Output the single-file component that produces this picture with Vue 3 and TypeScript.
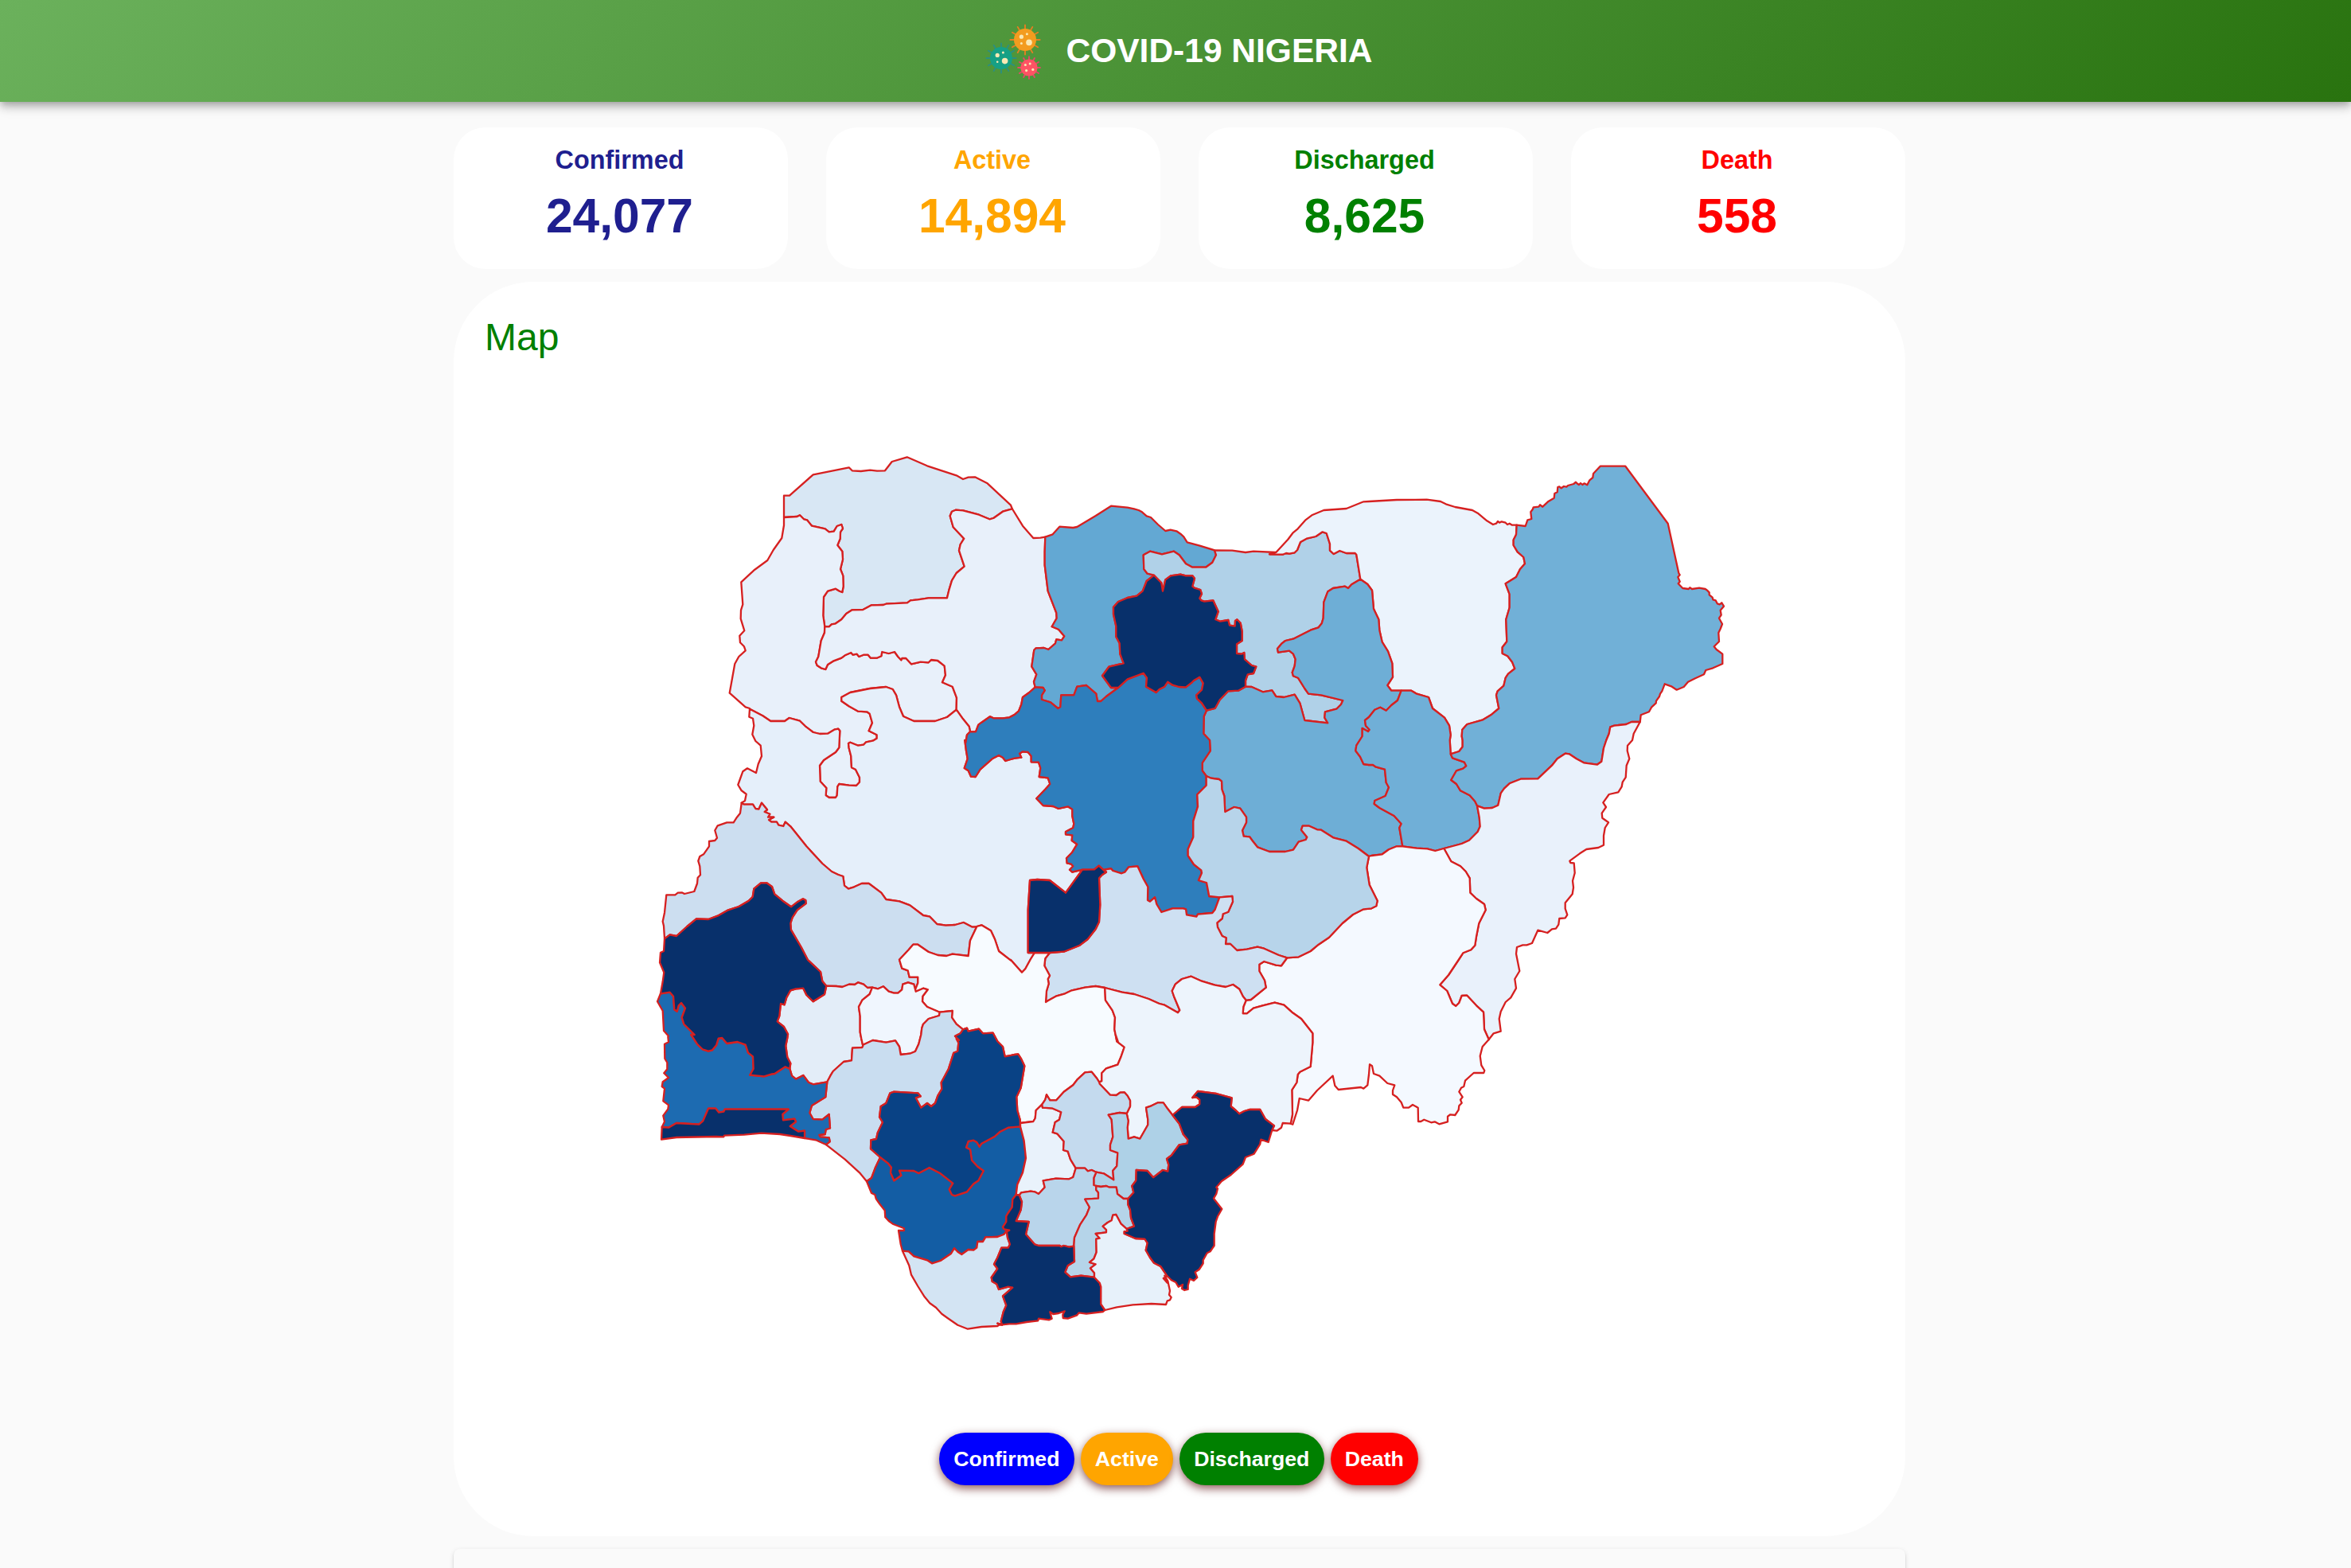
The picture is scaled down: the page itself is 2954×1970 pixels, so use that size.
<script setup lang="ts">
interface Stat {
  label: string
  value: string
  color: string
}

interface Virus {
  x: number
  y: number
  r: number
  reach: number
  body: string
  spike: string
  dots: [number, number, number][]
}

const stats: Stat[] = [
  { label: 'Confirmed', value: '24,077', color: '#1f1f8f' },
  { label: 'Active', value: '14,894', color: '#ffa500' },
  { label: 'Discharged', value: '8,625', color: '#008000' },
  { label: 'Death', value: '558', color: '#ff0000' },
]

const filters = [
  { label: 'Confirmed', color: '#0000ff' },
  { label: 'Active', color: '#ffa500' },
  { label: 'Discharged', color: '#008000' },
  { label: 'Death', color: '#ff0000' },
]

const viruses: Virus[] = [
  { x: 50, y: 20, r: 14, reach: 19.5, body: '#f39c1f', spike: '#e67e22', dots: [[-4.6, -3.8, 2.6], [2.4, -7.3, 1.5], [-4.6, 4.6, 1.5], [5, 3.4, 3.8]] },
  { x: 20, y: 43, r: 14, reach: 19.5, body: '#16a085', spike: '#2c8f80', dots: [[-4.8, -3.6, 2.6], [2.4, -7, 1.5], [-4.8, 4.8, 1.3], [4.6, 3.6, 3.8]] },
  { x: 55, y: 55, r: 10.6, reach: 14.8, body: '#ff5364', spike: '#e2486a', dots: [[-4.6, -3.6, 1.5], [1.2, -5, 1.5], [-3.4, 3.6, 1.6], [4.8, 2.4, 1.6]] },
]
const angles = Array.from({ length: 12 }, (_, i) => i * 30)

// Origin of each map sheet. Border points are stored per sheet in thirds of a unit.
const sheets: Record<string, [number, number]> = {
  A: [820, 560], B: [1270, 560], C: [1720, 560],
  D: [820, 930], E: [1270, 930], F: [1720, 930],
  G: [820, 1300], H: [1270, 1300],
}

// Borders are shared between neighbours: "o" arcs are the national outline, "i" arcs are internal.
const arcs: Record<string, string> = {
  o1: 'A 495,270 495,188 516,188 605,109 740,82 752,94 785,96 820,92 846,95 876,94 902,60 959,43 1035,76 1145,112 1170,126 1190,119 1215,118 1262,142 1350,224 1355,237',
  o2: 'A 1355,237 B 45,302 85,348 112,347 130,344',
  o3: 'B 130,344 158,334 184,305 235,309 250,306 320,264 378,227 440,233 465,238 482,243 495,250 512,265 528,270 555,297 583,321 602,317 625,322 640,332 652,343 665,364 710,376 768,394',
  o4: 'B 768,394 835,395 885,402 915,398 1000,402',
  o5: 'B 1000,402 1045,353 1063,329 1082,313 1110,281 1135,262 1180,243 1265,237 1330,211 C 0,210 105,204 218,203 270,210 290,220 325,231 390,243 410,254 445,283 468,297 480,293 486,285 492,290 500,286 515,290 522,297 530,293 540,299 557,299',
  o6: 'C 557,299 590,303 598,280 613,276 610,250 617,240 620,232 640,230 645,223 655,230 675,211 698,197 700,180 710,175 712,156 718,154 725,160 735,153 745,155 750,150 772,144 780,137 786,143 792,147 798,141 805,147 812,142 823,148 832,130 844,120 846,105 872,77 967,77 1127,293 1168,480 1172,487 1165,495 1172,512 1166,520 1183,537 1205,540 1210,535 1218,540 1245,536 1268,540 1275,545 1283,553 1283,562 1295,572 1297,580 1307,583 1313,595 1322,598 1330,592 1338,605 1325,620 1328,638 1320,650 1332,672 1325,690 1318,705 1320,738 1301,757 1310,768 1333,785 1333,822 1297,838 1270,846 1263,862 1230,877 1203,890 1187,909 1160,920 1140,907 1115,898 1105,925 1098,935 1095,945 1083,962 1082,970 1066,985 1056,1003 1025,1015 1022,1041',
  o7: 'C 1022,1041 998,1085 993,1110 975,1130 F 975,20 974,40 982,70 971,95 968,140 956,158 953,175 940,196 905,204 883,235 894,252 878,275 880,293 903,310 890,330 885,360 885,395 865,405 820,411 795,427 757,455 760,462 773,463 776,500 768,530 771,555 767,580 740,613 740,635 748,658 740,670 718,672 715,695 705,710 690,712 673,726 637,716 626,740 615,765 595,772 580,772 558,780 555,805 568,870 550,900 555,935 535,970 515,987 497,1023 491,1050 497,1097 470,1105 452,1128',
  o8: 'F 452,1128 428,1155 419,1190 424,1225 436,1245 433,1254 395,1254 363,1283 358,1305 348,1310 340,1325 353,1345 345,1355 350,1367 340,1378 338,1393 325,1413 307,1411 297,1418 297,1438 265,1447 248,1438 235,1441 208,1430 196,1437 186,1437 185,1385 165,1374 150,1385 130,1385 122,1365 105,1345 90,1335 90,1320 97,1300 70,1293 40,1265 18,1257 12,1228 3,1222 H 1350,150 1345,190 1330,203 1320,198 1235,207 1222,192 1214,155 1155,210 1122,248 1088,240 1080,285 1063,338',
  o9: 'H 1055,335 1025,333 1020,350 1003,362 985,360',
  o10: 'H 985,360 971,405 943,395 940,412 917,449 885,462 875,488 830,528 795,552 775,575 780,580 775,600 765,617 796,657 780,685 773,705 767,750 767,795 752,817 740,823 725,850 725,862 710,885 695,895 703,915 690,927 675,920 668,945 668,960 655,963 645,957 648,942 632,950 622,933 605,925 590,910',
  o11: 'H 590,910 575,918 590,935 580,908 592,928 600,965 597,980 605,990 600,1000 590,1003 585,1017 530,1014 460,1018 400,1027 355,1038',
  o12: 'H 355,1038 348,1044 285,1052 257,1048 250,1057 215,1070 197,1068 196,1055 203,1042 180,1050 160,1053 148,1045 155,1070 145,1075 105,1070 103,1078 60,1083 20,1090 G 1345,1090 1310,1094',
  o13: 'G 1310,1090 1300,1098 1240,1101 1188,1109 1150,1094 1115,1070 1090,1052 1068,1028 1045,1012 1025,988 1000,948 975,905 967,870 942,815',
  o14: 'G 942,815 935,790 927,738 948,738 948,730 905,713 890,702 877,688 875,662 855,637 842,618 838,603 825,597 807,553',
  o15: 'G 807,553 780,520 725,470 655,415',
  o16: 'G 655,415 615,397 573,390',
  o17: 'G 573,390 520,381 480,375 410,371 345,377 270,380 268,385 240,384 90,387 33,395 35,348',
  o18: 'G 35,348 45,328 40,305 58,280 60,265 40,250 45,203 35,195 38,178 60,162 43,145 55,130 55,105 46,90 45,35 60,28 58,8 D 60,1115 42,1095 38,1020 18,985 30,955',
  o19: 'D 30,955 38,910 43,875 27,838 30,800 42,795 45,748',
  o20: 'D 45,748 42,700 38,683 45,650 52,583 85,583 95,575 110,574 120,579 157,570 168,540 170,518 180,508 178,475 172,455 178,438 192,430 213,400 213,381 235,378 243,368 235,340 245,322 280,310 305,310 318,290 330,275 335,238',
  o21: 'D 335,236 348,228 353,203 335,190 322,168 340,118 357,106 390,123 398,90 411,60 407,20 388,3 A 376,1088 382,1055 378,1028 364,1022 366,992',
  o22: 'A 366,990 350,985 290,932 310,822 325,795 350,772 345,757 330,742 328,716 346,697 332,652 333,620 340,598 334,514 385,467 433,432 455,393 487,348 495,300 495,270',
  i1: 'A 495,270 545,267 555,262 570,277 582,280 600,302 650,313 665,325 683,323 695,303 712,297 717,312 708,325 707,350 697,375 715,398 717,428 708,465 718,490 719,530 715,552 705,548 690,539 660,548 645,570 643,640 649,682',
  i2: 'A 649,682 665,682 675,673 688,671 712,655 730,633 752,619 793,618 825,601 870,600 880,596 960,592 972,583 1000,580 1040,574 1110,574 1117,545 1128,508 1145,480 1175,455 1155,395 1160,372 1174,350 1133,307 1121,265 1128,248 1142,242 1170,244 1230,260 1270,277 1285,273 1320,248 1355,238',
  i3: 'A 649,682 648,705 635,735 625,795 615,815 620,828 635,838 652,843 660,825 680,812 712,800 725,790 748,780 755,788 770,785 778,795 795,788 812,788 822,800 845,800 862,793 865,777 890,783 912,777 925,795 937,808 940,801 955,801 975,823 1010,815 1040,817 1050,807 1075,810 1100,830 1104,865 1092,892 1130,908 1146,950 1145,995',
  i4: 'A 1145,995 1110,1023 1065,1038 985,1038 945,1020 930,985 918,940 905,918 880,909 820,915 745,930 712,948 712,962 740,982 775,1001 808,1003 818,1010 828,1045 815,1075 845,1090 845,1103 830,1112 805,1117 795,1127 775,1130 745,1118 738,1122 740,1140 D 748,60 750,103 765,110 780,140 780,158 768,171 740,170 703,165 697,175 695,208 690,216 665,216 653,208 655,180 632,155 630,95 645,75 690,45 703,28 A 706,1075 700,1067 685,1070 660,1085 630,1086 605,1080 575,1057 555,1037 515,1026 498,1038 445,1038 415,1018 366,992',
  i5: 'A 1145,995 1170,1030 1193,1058 1197,1078',
  i6: 'A 1197,1078 1218,1078 1228,1052 1240,1043 1272,1021 1285,1027 1320,1027 1345,1024 1365,1013 B 30,1000 40,975 45,948 70,930 92,910',
  i7: 'B 92,910 87,890 97,862 79,832 88,770 95,763 125,762 142,768 168,745 172,730 192,733 202,718 180,692 155,682 173,650 172,630 140,548 128,450 128,400 130,344',
  i8: 'B 92,910 122,912 128,922 117,940 117,957 150,967 178,990 187,985 190,940 238,940 250,908 285,903 322,935 327,963 340,963 360,945 405,912',
  i9: 'B 405,912 378,912 345,867 370,833 425,820 412,785 410,745 397,720 397,680 387,635 387,608 405,588 440,573 475,566 497,548 512,510 540,488',
  i10: 'B 540,488 515,482 502,465 500,412 525,398 570,409 615,398 635,412 660,445 685,458 735,458 760,440 774,412 768,394',
  i11: 'B 540,488 568,517 573,548 583,505 603,490 640,485 660,490 685,490 693,500 685,530 692,536 715,543 720,558 712,575 718,583 730,587 763,583 782,625 772,655 790,662 820,657 825,677 845,680 846,660 853,655 866,668 872,700 872,735 852,748 852,783 870,785 880,780 882,805 908,828 925,833 915,858 893,862 885,885 885,908',
  i12: 'B 405,912 440,880 500,857 513,875 510,908 548,930 560,918 580,908 592,890 610,902 635,909 660,910 683,892 690,885 712,872 725,895 720,920 700,940 702,953 720,970 738,998',
  i13: 'B 738,998 770,990 788,958 820,925 858,923 885,908',
  i14: 'B 885,908 908,909 950,928 985,922 1000,945 1030,948 1070,938 1090,970 1108,1035 1195,1045 1183,1025 1185,1003 1228,992 1245,975 1252,960 1170,940 1122,935 1108,915 1083,875 1065,868 1061,855 1070,830 1073,805 1065,785 1050,773 1008,779 1005,765 1022,745 1035,735 1065,728 1130,695 1160,685 1172,670 1178,650 1180,590 1195,550 1215,537 1260,530 1272,537 1285,523 1318,503',
  i15: 'B 1318,503 1303,410 1298,405 1265,405 1240,396 1217,408 1203,395 1203,370 1190,330 1175,325 1150,342 1115,350 1092,363 1080,393 1070,403 1050,407 1038,405 1025,410 975,409 1000,402',
  i16: 'B 1318,503 1345,522 1362,545 1365,580 1368,615 C 37,655 40,695 50,740 72,775 88,820 90,872 70,903 85,923 122,923',
  i17: 'C 122,923 160,923 180,935 225,948 240,990 285,1025 303,1055 308,1090 F 305,0 308,52',
  i18: 'F 308,52 340,42 353,25 353,0 C 350,1095 352,1070 370,1050 430,1033 460,1015 490,990 480,940 485,925 508,905 515,875 525,860 550,840 540,815 523,793 503,783 503,760 520,738 517,655 530,610 530,560 515,520 555,495 570,465 588,445 583,420 560,400 545,375 545,355 555,335 557,299',
  i19: 'F 308,52 315,67 360,83 367,97 355,107 330,115 310,150 330,165 345,190 380,208 400,230 408,247',
  i20: 'F 408,247 435,257 465,255 487,245 497,200 510,182 530,163 572,146 637,145 690,95 710,70 740,50 755,52 782,70 810,85 860,92 877,80 885,30 895,0 C 905,1085 910,1060 925,1055 970,1050 990,1041 1022,1041',
  i21: 'F 408,247 416,290 419,325 410,345 378,377 350,390 283,408',
  i22: 'C 122,923 108,960 85,978 65,998 43,986 22,995 0,1023 B 1335,1035 1338,1055 1352,1070 1347,1077 1325,1065 1325,1095 1303,1130 E 1300,40 1317,62 1330,90 1350,93 F 15,93 25,100 60,110 65,160 75,178 62,210 22,228 20,240 40,255 95,285 122,315 115,330 127,400',
  i23: 'F 127,400 180,407 220,409 250,417 283,408',
  i24: 'F 127,400 105,400 75,412 50,430 10,435 E 1350,438',
  i25: 'F 283,408 310,457 345,475 365,495 380,520 382,575 405,597 435,618 440,640 415,690 405,740 400,773 385,790 355,802 340,825 300,885 268,922 295,945 315,993 328,1002 340,990 350,963 370,962 405,1000 432,1025 435,1090 452,1128',
  i26: 'B 738,998 728,1020 727,1085 750,1110 E 752,40 722,85 722,115 737,135',
  i27: 'E 737,135 755,143 785,147 795,155 796,185 805,210 808,270 842,252 865,257 888,290 888,310 873,340 878,362 900,364 912,380 930,403 975,420 1035,420 1065,413 1085,383 1112,375 1117,365 1095,338 1100,323 1125,323 1155,337 1170,338 1215,367 1265,380 1310,408 1350,438',
  i28: 'E 737,135 737,170 703,205 705,250 688,305 688,365 668,410 668,435 690,468 718,490 720,500 708,528 738,537 748,588 787,592',
  i29: 'E 787,592 770,638 760,651 705,656 700,665 663,658 660,637 650,634 610,634 568,648 550,618 543,592 525,608 516,603 517,553 500,523 478,475 445,478 430,497 418,502 385,492 378,484 355,487',
  i30: 'E 358,497 332,473 315,487 270,488',
  i31: 'E 270,488 232,497 222,488 235,475 228,467 212,463 210,445 232,422 250,392 230,378 232,358 207,355 207,345 235,330 238,315 232,285 232,260 215,250 180,258 160,249 122,246 97,220 130,185 148,165 140,142 107,138 112,105 105,83 77,82 77,60 65,45 45,43 33,50 40,65 15,68 0,72 D 1330,78 1320,65 1305,57 1280,70 1235,110 1217,138 1200,137 1190,115 1175,105 1187,70 1182,40 1177,0 A 1180,1120 1185,1090 1197,1078',
  i32: 'E 270,488 207,575 147,528 100,525 72,528 65,640 65,801 90,801',
  i33: 'E 90,801 147,801',
  i34: 'E 147,801 200,797 260,773 290,750 320,712 333,685 337,620 333,520 345,507 360,497',
  i35: 'E 90,801 75,825 55,862 42,875 0,828 D 1350,830 1305,795 1290,750 1275,718 1240,697 1222,702',
  i36: 'D 335,236 345,242 378,242 388,258 400,260 411,236 432,262 422,270 442,278 435,290 457,290 438,300 448,308 468,308 475,320 493,324 500,308 520,325 580,400 640,465 675,495 700,507 718,513 723,548 738,560 760,553 788,540 815,540 862,575 880,600 930,607 970,622 1020,660 1045,665 1072,693 1105,698 1140,696 1172,687 1205,704 1222,703',
  i37: 'D 1222,703 1197,755 1190,813 1150,808 1130,806 1108,813 1075,810 1040,798 1000,770 982,770 965,790 930,827 940,860 962,868 968,893 1000,893 1000,915 990,940',
  i38: 'D 990,940 985,920 963,913 943,920 940,940 925,953 910,953 890,947 870,928 850,937 828,932',
  i39: 'D 828,932 810,933 795,920 775,913 762,921 740,920 715,930 692,927 655,926',
  i40: 'D 655,926 640,908 633,873 585,828 560,780 522,715 520,690 527,668 545,640 578,615 577,603 567,598 548,608 522,628 490,605 460,580 450,552 430,538 408,538 382,560 377,590 362,605 325,627 285,640 245,662 210,675 165,673 130,702 90,738 65,733 45,748',
  i41: 'D 655,926 648,958 605,985 580,960 568,935 540,937 520,943 505,970 497,997 483,993 478,1040 470,1060 495,1080 510,1108 G 508,12 502,42 508,85 520,108 517,128',
  i42: 'G 517,128 500,121 460,147 450,148 420,157 367,152 380,128 378,82 360,68 350,38 320,27 280,33 262,12 248,14 240,40 225,58 210,62 188,55 168,35 145,0 D 158,1110 118,1070 110,1045 123,1010 108,990 98,1000 92,1022 82,1015 78,965 65,950 30,955',
  i43: 'G 517,128 525,155 540,167 568,153 588,180 605,187 658,178',
  i44: 'G 658,178 652,235 600,267 592,295 605,318 640,320 665,300 669,352 653,357 650,375 628,378 632,385 665,388 668,403 655,413',
  i45: 'G 35,348 60,350 90,333 175,338 190,325 210,278 238,278 250,293 268,290 272,281 512,281 490,300 492,322 535,317 540,328 518,345 550,365 573,362 573,390',
  i46: 'D 828,932 818,957 790,980 777,1005 782,1040 782,1100 G 787,15 793,42',
  i47: 'G 793,42 790,48 753,50 750,97 720,102 680,138 670,155 658,178',
  i48: 'G 793,38 830,21 880,29 915,22 930,45 935,75 970,71 990,63 1003,35 1012,0 D 1015,1085 1020,1070 1040,1050 1080,1038 1082,1025',
  i49: 'D 990,940 992,947 1020,935 1037,940 1018,965 1017,985 1035,1005 1082,1025',
  i50: 'D 1082,1025 1130,1020 1128,1045 1145,1070 1170,1090',
  i51: 'D 1170,1090 1160,1105 1140,1115 1155,1130 G 1145,15 1153,30 1150,62 1135,68 1115,130 1088,180 1090,205 1075,230 1065,258 1050,270 1035,258 1012,275 992,238 1010,232 1000,220 910,215 895,220 880,258 860,270 855,310 867,330 848,370 843,393 823,397 822,430 858,462',
  i52: 'G 858,462 840,500 825,540 807,553',
  i53: 'G 858,462 888,485 900,500 897,520 910,550 937,530 930,512 985,513 1003,522 1043,501 1085,523 1132,560 1118,583 1128,603 1140,607 1185,592 1210,562 1228,550 1247,513 1225,497 1203,473 1197,433 1182,425 1190,402 1210,398 1222,405 1232,422 1240,410 1290,383 1310,365 1340,350 H 36,346',
  i54: 'D 1170,1090 1185,1085 1190,1097 1230,1088 1245,1105 1283,1103 1300,1135 G 1320,45 1328,82 1365,75 H 28,73 40,92 52,118 38,200 22,235 25,285 35,320 36,346',
  i55: 'H 36,333 85,327 92,315 95,285 118,263',
  i56: 'H 118,263 130,245 135,226 148,247 172,247 200,215 235,190 250,170 280,142 305,140 325,165 333,178',
  i57: 'H 333,178 343,175 343,145 360,127 403,113 415,85 428,47 400,25 395,0 E 405,1138 397,1120 391,1090 393,1045 383,1018 357,980 355,935',
  i58: 'E 147,801 130,823 127,850 147,887 140,900 143,918 135,945 132,987 140,982 170,965 205,955 230,943 280,932 320,927 355,933',
  i59: 'E 355,933 420,950 465,957 520,975 560,993 580,998 630,1027 637,1018 615,965 608,945 620,920 645,900 680,890 720,908 770,923 810,930 838,921 862,938 875,965 887,980',
  i60: 'E 887,980 905,978 962,932 957,905 937,870 937,845 955,834 1000,848 1020,850 1042,820',
  i61: 'E 787,592 835,588 837,608 820,647 800,655 797,672 778,688 780,705 797,738 812,745 810,768 828,768 853,792 890,788 930,779 955,785 1010,810 1042,820',
  i62: 'E 1042,820 1085,817 1130,795 1160,770 1200,743 1250,690 1290,657 1330,637 1360,634 1378,625 1382,605 1352,545 1342,480 1350,438',
  i63: 'E 887,980 877,1005 875,1030 890,1030 915,1010 950,1000 995,989 1030,998 1060,1025 1095,1050 1138,1105 1138,1140 H 1130,120 1090,140 1082,150 1078,180 1060,208 1062,300 1055,335',
  i64: 'H 333,178 335,185 375,227 398,228 412,218 428,217 440,230 450,248 450,270 437,297',
  i65: 'H 437,297 443,325 440,350 443,392 465,385 487,392 517,340 517,320 510,275 530,268 555,256 575,256 592,280 610,303',
  i66: 'H 610,303 645,273 695,273 712,262 712,245 700,235 685,237 705,213 775,222 833,238 830,270 848,285 862,298 880,288 900,282 940,282 960,318 993,343 985,360',
  i67: 'H 118,263 120,275 155,277 190,292 183,320 167,330 158,368 175,373 200,402 198,435 215,440 225,470 245,503',
  i68: 'H 245,503 280,503 290,514 305,510 322,518',
  i69: 'H 322,518 350,523 388,547 385,512 400,495 403,445 375,435 375,415 385,385 380,320 368,302 410,294 437,297',
  i70: 'H 322,518 313,540 313,567 322,570',
  i71: 'H 322,570 340,573 360,570 372,575 398,575 402,600 425,618 442,618',
  i72: 'H 442,618 463,595 457,570 472,550 473,510 515,513 537,538 573,510 592,515 595,490 588,468 605,455 635,415 665,410 667,395 650,375 635,335 610,303',
  i73: 'H 322,570 322,585 330,595 330,617 280,620 297,650 285,680 262,715 240,765 238,797',
  i74: 'H 245,503 235,537 220,544 170,542 122,550 128,575 105,600 90,592 75,590 40,595 32,605',
  i75: 'H 36,346 50,400 57,465 45,520 25,565 20,603',
  i76: 'H 20,603 32,605',
  i77: 'H 32,605 42,630 38,660 20,702 68,705 57,752 90,790 105,795 185,795 190,799 200,795 220,800 238,797',
  i78: 'H 238,797 240,855 215,870 205,895 225,913 265,908 315,914',
  i79: 'H 315,914 335,935 340,950 340,1015 355,1038',
  i80: 'H 315,914 315,898 300,880 320,865 297,858 313,845 323,820 322,770 335,767 320,750 360,745 360,735 347,722 365,708 380,700 385,680 397,678 415,712 437,732',
  i81: 'H 442,618 442,640 450,660 453,690 465,722 450,727 437,732',
  i82: 'H 437,732 440,740 428,742 428,750 470,768 505,770 515,785 509,812 525,840 540,860 565,873 590,910',
  i83: 'H 20,603 7,620 5,650 G 1338,675 1333,685 1333,705 1320,725 1325,733 1345,737 1335,742',
  i84: 'G 1335,738 1325,752 1300,762 1255,763 1245,780 1225,780 1222,803 1210,812 1190,810 1165,828 1150,818 1137,805 1125,825 1085,852 1053,862 1035,850 985,835 965,817 942,815',
  i85: 'G 1335,742 1338,765 1347,790 1340,803 1315,803 1300,840 1287,865 1300,882 1277,915 1280,930 1297,940 1305,960 1340,950 1357,953 1320,985 1333,1020 1322,1045 1313,1080 1318,1094 1300,1088',
}

const regions: { name: string; fill: string; ring: string }[] = [
  { name: 'Sokoto', fill: '#d8e7f4', ring: 'o1 -i2 -i1' },
  { name: 'Kebbi', fill: '#e8f0fa', ring: 'i1 i3 i4 o22' },
  { name: 'Zamfara', fill: '#e8f0fa', ring: 'i2 o2 -i7 -i6 -i5 -i3' },
  { name: 'Niger', fill: '#e5effa', ring: 'o21 -i4 i5 -i31 i32 i35 -i36' },
  { name: 'Katsina', fill: '#63a8d3', ring: 'o3 -i10 -i9 -i8 i7' },
  { name: 'Jigawa', fill: '#b0d1e8', ring: 'i10 o4 -i15 -i14 -i11' },
  { name: 'Yobe', fill: '#ebf3fc', ring: 'i15 o5 -i18 -i17 -i16' },
  { name: 'Bauchi', fill: '#6eaed6', ring: 'i13 i14 i16 i22 i24 -i27 -i26' },
  { name: 'Gombe', fill: '#70afd7', ring: 'i17 i19 i21 -i23 -i22' },
  { name: 'Borno', fill: '#71b0d7', ring: 'i18 o6 -i20 -i19' },
  { name: 'Adamawa', fill: '#e9f1fb', ring: 'i20 o7 -i25 -i21' },
  { name: 'Taraba', fill: '#f4f9ff', ring: 'i25 o8 -i63 i60 i62 -i24 i23' },
  { name: 'Kaduna', fill: '#2e7ebc', ring: 'i8 i12 i26 i28 i29 i30 i31 i6' },
  { name: 'Kano', fill: '#08306b', ring: 'i9 i11 -i13 -i12' },
  { name: 'Plateau', fill: '#b7d4ea', ring: 'i27 -i62 -i61 -i28' },
  { name: 'Nasarawa', fill: '#cee0f2', ring: 'i61 -i60 -i59 -i58 i34 -i29' },
  { name: 'Kwara', fill: '#ccdef0', ring: 'o20 i36 i37 i38 i39 i40' },
  { name: 'Kogi', fill: '#f7fbff', ring: '-i35 i33 i58 -i57 -i56 -i55 -i54 -i50 -i49 -i37' },
  { name: 'Abuja', fill: '#08306b', ring: 'i30 i32 i33 i34' },
  { name: 'Osun', fill: '#e3edf8', ring: '-i39 i46 i47 -i43 -i41' },
  { name: 'Ekiti', fill: '#f0f6fe', ring: '-i38 i49 -i48 -i46' },
  { name: 'Ondo', fill: '#c9ddf0', ring: 'i48 i50 i51 i52 o15 -i44 -i47' },
  { name: 'Delta', fill: '#135da4', ring: 'i53 i75 i83 i84 o14 -i52' },
  { name: 'Edo', fill: '#094285', ring: 'i54 -i53 -i51' },
  { name: 'Ogun', fill: '#1d6bb1', ring: 'o18 -i42 i43 i44 o16 -i45' },
  { name: 'Oyo', fill: '#08306b', ring: '-i40 i41 i42 o19' },
  { name: 'Lagos', fill: '#08306b', ring: 'i45 o17' },
  { name: 'Bayelsa', fill: '#d3e4f3', ring: '-i84 i85 o13' },
  { name: 'Benue', fill: '#edf4fc', ring: 'i59 i63 o9 -i66 -i65 -i64 i57' },
  { name: 'Anambra', fill: '#e9f2fb', ring: 'i55 i67 i74 -i76 -i75' },
  { name: 'Enugu', fill: '#c4daee', ring: 'i56 i64 -i69 -i68 -i67' },
  { name: 'Ebonyi', fill: '#aed1e7', ring: 'i65 -i72 -i71 -i70 i69' },
  { name: 'Imo', fill: '#b9d5eb', ring: 'i68 i70 i73 -i77 -i74' },
  { name: 'Abia', fill: '#b5d4e9', ring: 'i71 i81 -i80 -i78 -i73' },
  { name: 'Rivers', fill: '#08306b', ring: 'i76 i77 i78 i79 o12 -i85 -i83' },
  { name: 'Akwa Ibom', fill: '#e7f1fa', ring: 'i80 i82 o11 -i79' },
  { name: 'Cross River', fill: '#08306b', ring: 'i66 o10 -i82 -i81 i72' },
]

function points(arc: string): string[] {
  let origin: [number, number] = [0, 0]
  const out: string[] = []
  for (const token of arc.split(' ')) {
    if (sheets[token]) {
      origin = sheets[token]
      continue
    }
    const [x, y] = token.split(',').map(Number)
    out.push(`${(origin[0] + x / 3).toFixed(1)},${(origin[1] + y / 3).toFixed(1)}`)
  }
  return out
}

function outline(ring: string): string {
  const all = ring.split(' ').flatMap((id) =>
    id.startsWith('-') ? points(arcs[id.slice(1)]).reverse() : points(arcs[id]),
  )
  return `M${all.join('L')}Z`
}

const shapes = regions.map((r) => ({ name: r.name, fill: r.fill, d: outline(r.ring) }))
</script>

<template>
  <div class="page">
    <header class="bar">
      <svg class="logo" viewBox="0 0 70 70">
        <g v-for="(v, n) in viruses" :key="n" :transform="`translate(${v.x} ${v.y})`">
          <line
            v-for="a in angles"
            :key="a"
            x1="0"
            y1="0"
            x2="0"
            :y2="-v.reach + 0.9"
            :transform="`rotate(${a})`"
            :stroke="v.spike"
            stroke-width="1.9"
            stroke-linecap="round"
          />
          <circle :r="v.r" :fill="v.body" />
          <circle v-for="(d, i) in v.dots" :key="i" :cx="d[0]" :cy="d[1]" :r="d[2]" fill="#fae9b4" />
        </g>
      </svg>
      <h1 class="title">COVID-19 NIGERIA</h1>
    </header>

    <main class="content">
      <section class="stats">
        <article v-for="s in stats" :key="s.label" class="stat" :style="{ color: s.color }">
          <div class="stat-label">{{ s.label }}</div>
          <div class="stat-value">{{ s.value }}</div>
        </article>
      </section>

      <section class="map-card">
        <h2 class="map-title">Map</h2>
        <svg class="map" viewBox="570 500 1824 1260">
          <path v-for="s in shapes" :key="s.name" :d="s.d" :fill="s.fill" class="region" />
        </svg>
        <div class="filters">
          <button v-for="f in filters" :key="f.label" class="filter" :style="{ background: f.color }">
            {{ f.label }}
          </button>
        </div>
      </section>

      <section class="next-card"></section>
    </main>
  </div>
</template>

<style>
body {
  margin: 0;
  background: #fafafa;
}
</style>

<style scoped>
.page {
  height: 1970px;
  overflow: hidden;
  background: #fafafa;
  font-family: "Liberation Sans", Arial, sans-serif;
}
.bar {
  position: relative;
  display: flex;
  align-items: center;
  box-sizing: border-box;
  height: 128px;
  padding-left: 1238px;
  background: linear-gradient(135deg, #6bb15c, #29730f);
  box-shadow: 0 4px 8px -2px rgba(0, 0, 0, 0.2), 0 8px 10px rgba(0, 0, 0, 0.14),
    0 2px 20px rgba(0, 0, 0, 0.12);
}
.logo {
  width: 70px;
  height: 70px;
  margin-top: 2px;
}
.title {
  margin: 0 0 0 31.5px;
  color: #fff;
  font-size: 42.5px;
  line-height: 50px;
  font-weight: 700;
  white-space: nowrap;
}
.content {
  width: 1824px;
  margin-left: 570px;
  padding-top: 32px;
}
.stats {
  display: grid;
  grid-template-columns: repeat(4, 420px);
  gap: 48px;
}
.stat {
  box-sizing: border-box;
  height: 178px;
  padding: 22px 3px 0 0;
  border-radius: 40px;
  background: #fff;
  text-align: center;
  font-weight: 700;
}
.stat-label {
  font-size: 32.4px;
  line-height: 38px;
}
.stat-value {
  margin-top: 16px;
  font-size: 60.5px;
  line-height: 70px;
}
.map-card {
  display: flex;
  flex-direction: column;
  height: 1576px;
  margin-top: 16px;
  border-radius: 100px;
  background: #fff;
}
.map-title {
  box-sizing: border-box;
  height: 146px;
  margin: 0;
  padding: 42px 0 0 39px;
  color: #008000;
  font-size: 48px;
  line-height: 55px;
  font-weight: 400;
}
.map {
  display: block;
  width: 1824px;
  height: 1260px;
}
.region {
  stroke: #d62020;
  stroke-width: 2.3;
  stroke-linejoin: round;
}
.filters {
  display: flex;
  justify-content: center;
  gap: 8px;
  margin-top: 40px;
  padding-right: 2px;
}
.filter {
  height: 66px;
  padding: 0 18.2px;
  border: 0;
  border-radius: 40px;
  color: #fff;
  font-family: inherit;
  font-size: 26.67px;
  font-weight: 700;
  box-shadow: 0 4px 12px rgba(80, 0, 0, 0.65);
}
.next-card {
  height: 200px;
  margin-top: 16px;
  border-radius: 8px;
  background: #fafafa;
  box-shadow: 0 4px 2px -2px rgba(0, 0, 0, 0.2), 0 2px 2px rgba(0, 0, 0, 0.14),
    0 2px 6px rgba(0, 0, 0, 0.12);
}
</style>
